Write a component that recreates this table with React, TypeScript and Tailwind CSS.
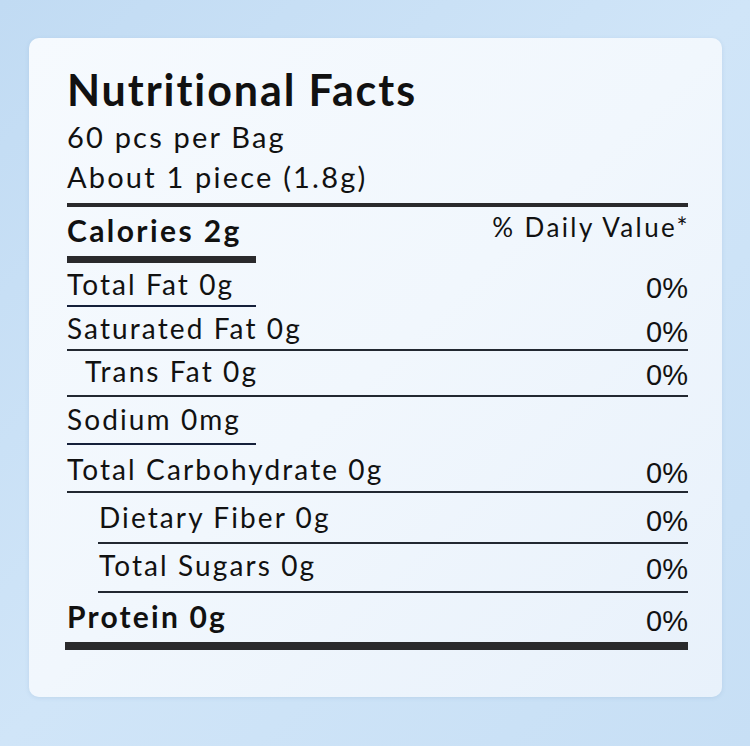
import React from 'react';

type Row = {
    label: string;
    value?: string;
    indent: string;
    gap: string;
    height: string;
    line: 'short' | 'full' | 'inset' | 'thick';
    bold?: boolean;
};

const ROWS: Row[] = [
    { label: 'Total Fat 0g', value: '0%', indent: 'pl-0', gap: 'mt-[7px]', height: 'h-[35px]', line: 'short' },
    { label: 'Saturated Fat 0g', value: '0%', indent: 'pl-0', gap: 'mt-[7px]', height: 'h-[35px]', line: 'full' },
    { label: 'Trans Fat 0g', value: '0%', indent: 'pl-[18px]', gap: 'mt-[6px]', height: 'h-[38px]', line: 'full' },
    { label: 'Sodium 0mg', indent: 'pl-0', gap: 'mt-[8px]', height: 'h-[38px]', line: 'short' },
    { label: 'Total Carbohydrate 0g', value: '0%', indent: 'pl-0', gap: 'mt-[10px]', height: 'h-[36px]', line: 'full' },
    { label: 'Dietary Fiber 0g', value: '0%', indent: 'pl-[32px]', gap: 'mt-[10px]', height: 'h-[39px]', line: 'inset' },
    { label: 'Total Sugars 0g', value: '0%', indent: 'pl-[32px]', gap: 'mt-[7px]', height: 'h-[40px]', line: 'inset' },
    { label: 'Protein 0g', value: '0%', indent: 'pl-0', gap: 'mt-[8px]', height: 'h-[41px]', line: 'thick', bold: true },
];

function Divider({ kind }: { kind: Row['line'] }) {
    if (kind === 'short') return <div className="h-[2px] w-[189px] bg-[#15203a]" />;
    if (kind === 'inset') return <div className="ml-[31px] h-[2px] bg-[#222831]" />;
    if (kind === 'thick') return <div className="-ml-[2px] h-[8px] bg-[#2a2a2c]" />;
    return <div className="h-[2px] bg-[#222831]" />;
}

export default function App() {
    return (
        <div
            className="w-[750px] h-[746px] overflow-hidden bg-gradient-to-br from-[#c1dbf3] via-[#d0e5f8] to-[#c7dff5] pt-[38px] pl-[29px]"
            style={{ fontFamily: 'Lato, "Open Sans", sans-serif' }}
        >
            <div className="w-[693px] h-[659px] rounded-[10px] bg-gradient-to-br from-[#f6fafe] via-[#f1f7fd] to-[#e8f1fb] shadow-[0_1px_4px_rgba(90,130,170,0.15)] pt-[30px] pl-[38px] pr-[34px] text-[#111]">
                {/* Header */}
                <h1 className="text-[43px] font-bold leading-none tracking-[1.9px]">Nutritional Facts</h1>
                <p className="mt-[11px] text-[29px] leading-none tracking-[2.2px]">60 pcs per Bag</p>
                <p className="mt-[11px] text-[29px] leading-none tracking-[2.2px]">About 1 piece (1.8g)</p>
                <div className="mt-[12px] h-[4px] bg-[#2a2a2c]" />

                {/* Calories */}
                <div className="mt-[7px] flex justify-between items-start">
                    <span className="mt-[1px] text-[30px] font-bold leading-none tracking-[2.4px]">Calories 2g</span>
                    <span className="-mr-[2px] text-[26px] leading-none tracking-[2.4px]">% Daily Value*</span>
                </div>
                <div className="mt-[11px] h-[7px] w-[189px] bg-[#2a2a2c]" />

                {/* Nutrient rows */}
                {ROWS.map((row) => (
                    <div key={row.label} className={row.gap}>
                        <div className={`${row.height} ${row.indent} flex justify-between items-start`}>
                            <span
                                className={
                                    row.bold
                                        ? 'text-[30px] font-bold leading-none tracking-[2.2px]'
                                        : 'text-[28px] leading-none tracking-[2.1px]'
                                }
                            >
                                {row.label}
                            </span>
                            {row.value && (
                                <span
                                    className={`${row.bold ? 'mt-[6px]' : 'mt-[4px]'} text-[29px] leading-none`}
                                    style={{ fontFamily: '"Liberation Sans", Arial, sans-serif' }}
                                >
                                    {row.value}
                                </span>
                            )}
                        </div>
                        <Divider kind={row.line} />
                    </div>
                ))}
            </div>
        </div>
    );
}
